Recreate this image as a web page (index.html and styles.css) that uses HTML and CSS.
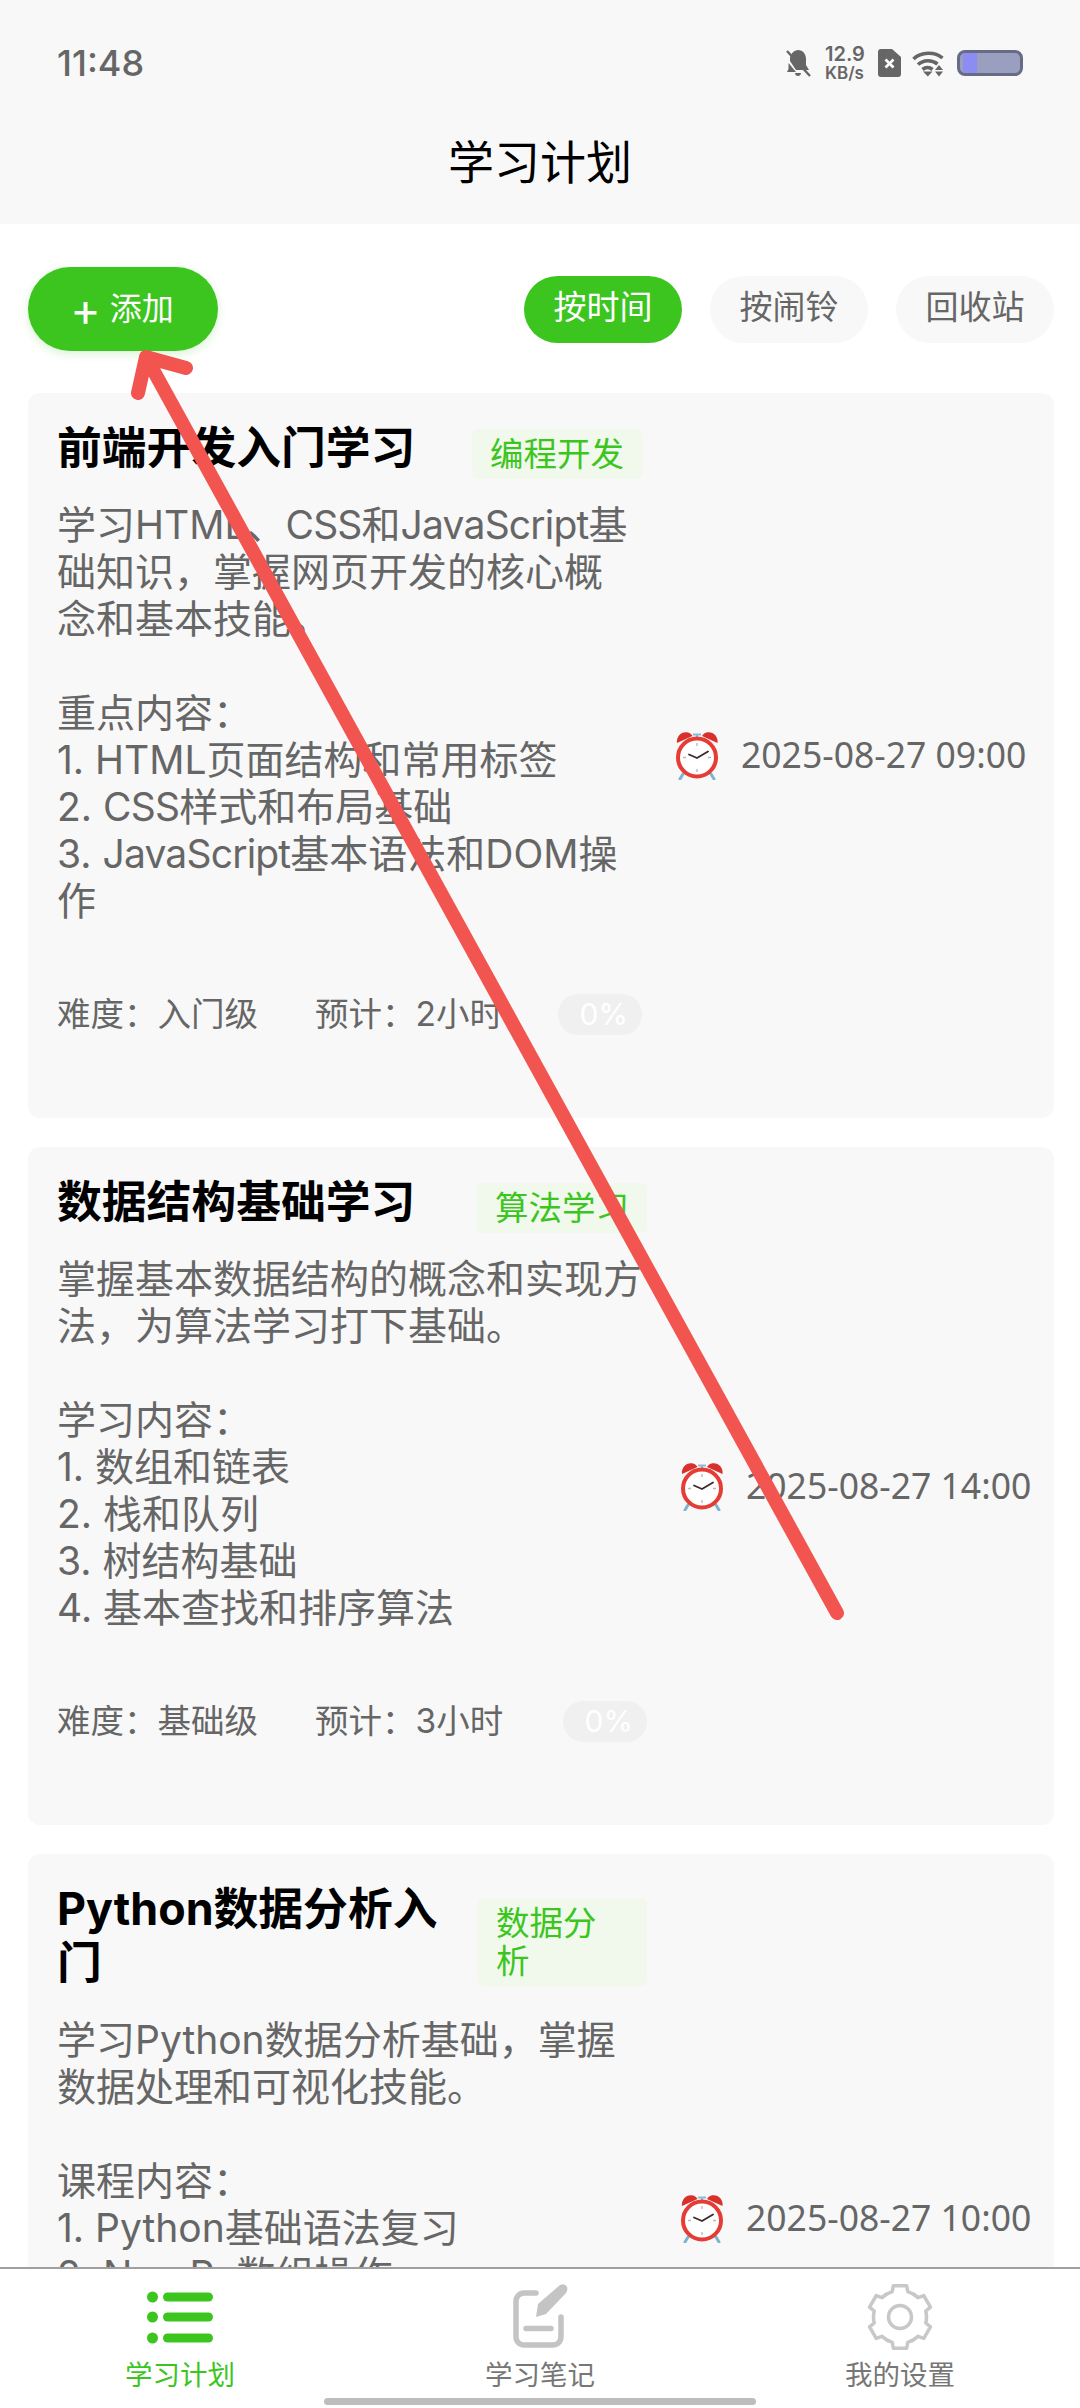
FILE: index.html
```html
<!DOCTYPE html>
<html lang="zh-CN">
<head>
<meta charset="UTF-8" />
<title>学习计划</title>
<meta name="viewport" content="width=device-width, initial-scale=1" />
<link rel="stylesheet" href="styles.css">
</head>
<body>

<svg width="0" height="0" class="defs">
  <symbol id="clock" viewBox="0 0 43 49">
    <path d="M7 43l-3 5M35 43l3 5" stroke="#7fb3cf" stroke-width="3" stroke-linecap="round" />
    <path d="M21 4v5M17 3.5h8" stroke="#8dbbd3" stroke-width="2.2" />
    <path d="M1 12C0 5 6 0 12 1.500c2 .5 4 2 4.500 3.500z" fill="#d9302b" />
    <path d="M41.500 12C42.500 5 36.500 0 30.500 1.500c-2 .5-4 2-4.500 3.500z" fill="#d9302b" />
    <circle cx="21" cy="26.500" r="19" fill="#fff" stroke="#e53d36" stroke-width="4" />
    <path d="M21 12v3M21 38v3M7 26.500h3M32 26.500h3" stroke="#b9b9b9" stroke-width="1.400" />
    <path d="M13 23.500l8 3.500 11-6.500" fill="none" stroke="#3a2a2a" stroke-width="1.800" stroke-linecap="round" stroke-linejoin="round" />
  </symbol>
</svg>

<div class="top-bar">
  <div class="status-bar">
    <span class="clock-time">11:48</span>
    <div class="status-icons">
      <svg class="ic-bell" width="26" height="28" viewBox="0 0 26 28">
        <path d="M13 1c5 0 8 4 8 9v6l3 5H11L5 12v-2c0-1 0-2 .5-3C7 3 10 1 13 1zM3.500 14L11 23H2l1.500-3zM10 24h6c0 2-1.500 3-3 3s-3-1-3-3z" fill="#666" />
        <path d="M2 2l23 25" stroke="#666" stroke-width="2.400" />
      </svg>
      <div class="net-speed"><span>12.9</span><span>KB/s</span></div>
      <svg class="ic-sim" width="23" height="28" viewBox="0 0 23 28">
        <path d="M3 0h11l9 8v17a3 3 0 0 1-3 3H3a3 3 0 0 1-3-3V3a3 3 0 0 1 3-3z" fill="#666" />
        <path d="M7.500 10.500l8 8M15.500 10.500l-8 8" stroke="#fff" stroke-width="2.600" />
      </svg>
      <svg class="ic-wifi" width="34" height="27" viewBox="0 0 34 27">
        <path d="M1.500 9C9 1.500 23 1.500 30.500 8M6 14.500c5.500-5 14-5 19.500-.5M10.500 19.500c3-2.500 7-2.500 10 0" fill="none" stroke="#666" stroke-width="3.600" />
        <path d="M11 21.500h9.500l-4.700 5zM27 15l4 5h-8zM23 21.500h8L27 26.500z" fill="#666" />
      </svg>
      <div class="battery"><div class="battery-level"></div></div>
    </div>
  </div>
  <div class="page-title">学习计划</div>
</div>

<div class="content">
  <div class="toolbar">
    <div class="add-btn"><span class="plus">+</span>添加</div>
    <div class="filters">
      <div class="filter active">按时间</div>
      <div class="filter">按闹铃</div>
      <div class="filter">回收站</div>
    </div>
  </div>

  <div class="plan-list">
    <div class="plan-card">
      <div class="plan-main narrow">
        <div class="plan-head">
          <div class="plan-title">前端开发入门学习</div>
          <div class="plan-tag">编程开发</div>
        </div>
        <div class="plan-desc">学习HTML、<span class="en">CSS</span>和<span class="en">JavaScript</span>基
础知识，掌握网页开发的核心概
念和基本技能。

重点内容：
1. HTML页面结构和常用标签
2. <span class="en">CSS</span>样式和布局基础
3. <span class="en">JavaScript</span>基本语法和DOM操
作</div>
        <div class="plan-meta">
          <span class="meta-item">难度：入门级</span>
          <span class="meta-item">预计：2小时</span>
          <span class="progress">0%</span>
        </div>
      </div>
      <div class="plan-time">
        <svg class="alarm"><use href="#clock" /></svg>
        <span>2025-08-27 09:00</span>
      </div>
    </div>

    <div class="plan-card">
      <div class="plan-main">
        <div class="plan-head">
          <div class="plan-title">数据结构基础学习</div>
          <div class="plan-tag">算法学习</div>
        </div>
        <div class="plan-desc">掌握基本数据结构的概念和实现方
法，为算法学习打下基础。

学习内容：
1. 数组和链表
2. 栈和队列
3. 树结构基础
4. 基本查找和排序算法</div>
        <div class="plan-meta">
          <span class="meta-item">难度：基础级</span>
          <span class="meta-item">预计：3小时</span>
          <span class="progress">0%</span>
        </div>
      </div>
      <div class="plan-time">
        <svg class="alarm"><use href="#clock" /></svg>
        <span>2025-08-27 14:00</span>
      </div>
    </div>

    <div class="plan-card last">
      <div class="plan-main">
        <div class="plan-head">
          <div class="plan-title">Python数据分析入<br>门</div>
          <div class="plan-tag">数据分<br>析</div>
        </div>
        <div class="plan-desc">学习Python数据分析基础，掌握
数据处理和可视化技能。

课程内容：
1. Python基础语法复习
2. NumPy数组操作</div>
      </div>
      <div class="plan-time">
        <svg class="alarm"><use href="#clock" /></svg>
        <span>2025-08-27 10:00</span>
      </div>
    </div>
  </div>
</div>

<div class="tab-bar">
  <div class="tab active">
    <svg width="70" height="70" viewBox="0 0 70 70">
      <g fill="#3cc51f">
        <ellipse cx="7.500" cy="15" rx="5.500" ry="5.500" />
        <ellipse cx="7.500" cy="35" rx="5.500" ry="5.500" />
        <ellipse cx="7.500" cy="56" rx="5.500" ry="5.500" />
        <rect x="18" y="10.500" width="50" height="9" rx="4.500" />
        <rect x="18" y="30.500" width="50" height="9" rx="4.500" />
        <rect x="18" y="51.500" width="50" height="9" rx="4.500" />
      </g>
    </svg>
    <span>学习计划</span>
  </div>
  <div class="tab">
    <svg width="70" height="70" viewBox="0 0 70 70">
      <path d="M31 11H19a8 8 0 0 0-8 8v36a8 8 0 0 0 8 8h29a8 8 0 0 0 8-8V35M21 46.500h25" fill="none" stroke="#c4c4c4" stroke-width="5.500" stroke-linecap="round" />
      <path d="M31 35l2-13L55 3q5-2 7 2 1 3-1 6L41 32z" fill="#c4c4c4" />
    </svg>
    <span>学习笔记</span>
  </div>
  <div class="tab">
    <svg width="70" height="70" viewBox="0 0 70 70">
      <path d="M27.250 9.660L28.350 3.700H41.650L42.750 9.660A26.500 26.500 0 0 1 53.070 15.620L58.780 13.590L65.430 25.110L60.820 29.040A26.500 26.500 0 0 1 60.820 40.960L65.430 44.890L58.780 56.410L53.070 54.380A26.500 26.500 0 0 1 42.750 60.340L41.650 66.300H28.350L27.250 60.340A26.500 26.500 0 0 1 16.930 54.380L11.220 56.410L4.570 44.890L9.180 40.960A26.500 26.500 0 0 1 9.180 29.040L4.570 25.110L11.220 13.590L16.930 15.620A26.500 26.500 0 0 1 27.250 9.660Z" fill="none" stroke="#c8c8c8" stroke-width="3.500" stroke-linejoin="round" />
      <circle cx="35" cy="35" r="11.500" fill="none" stroke="#c8c8c8" stroke-width="3.500" />
    </svg>
    <span>我的设置</span>
  </div>
</div>

<div class="home-indicator"></div>

<!-- hand drawn annotation on top of the screenshot -->
<svg class="annotation" width="1080" height="2408" viewBox="0 0 1080 2408">
  <path d="M138 393L146 357L186 368M146 357L837 1613" fill="none" stroke="#f2544f" stroke-width="14" stroke-linecap="round" stroke-linejoin="round" />
</svg>

</body>
</html>
```

FILE: styles.css
```css
* {
  box-sizing: border-box;
}
html, body {
  margin: 0;
  height: 100%;
}
body {
  position: relative;
  width: 1080px;
  height: 2408px;
  overflow: hidden;
  display: flex;
  flex-direction: column;
  background: #fff;
  font-family: Inter, "Noto Sans CJK SC", sans-serif;
  color: #666;
}
.defs {
  position: absolute;
}

/* top */
.top-bar {
  flex: none;
  height: 224px;
  background: #f8f8f8;
}
.status-bar {
  height: 100px;
  padding: 26px 57px 0 57px;
  display: flex;
  justify-content: space-between;
  align-items: center;
}
.clock-time {
  font-size: 36px;
  font-weight: 500;
  color: #666;
}
.status-icons {
  display: flex;
  align-items: center;
}
.net-speed {
  display: flex;
  flex-direction: column;
  margin: 0 14px 0 14px;
  font-weight: 600;
  text-align: center;
  width: 39px;
  white-space: nowrap;
}
.net-speed span:first-child {
  font-size: 20px;
  line-height: 20px;
}
.net-speed span:last-child {
  font-size: 17px;
  line-height: 18px;
}
.ic-wifi {
  margin: 0 11px;
}
.battery {
  width: 66px;
  height: 26px;
  border: 3px solid #666c85;
  border-radius: 8px;
  background: #9a9fc0;
  padding-left: 3px;
}
.battery-level {
  width: 14px;
  height: 100%;
  background: #8c8cf2;
}
.page-title {
  height: 124px;
  line-height: 124px;
  text-align: center;
  font-size: 46px;
  color: #000;
}

/* list area */
.content {
  flex: 1;
  min-height: 0;
  overflow: hidden;
  padding: 0 26px 0 28px;
}
.toolbar {
  display: flex;
  justify-content: space-between;
  align-items: center;
  margin-top: 43px;
  height: 84px;
}
.add-btn {
  width: 190px;
  height: 84px;
  padding-bottom: 6px;
  border-radius: 42px;
  background: #3cc51f;
  color: #fff;
  font-size: 32px;
  display: flex;
  align-items: center;
  justify-content: center;
  box-shadow: 0 3px 10px rgba(60, 197, 31, 0.2);
}
.plus {
  font-size: 46px;
  line-height: 1;
  margin: 6px 9px 0 -2px;
  font-weight: 400;
}
.filters {
  display: flex;
  gap: 28px;
}
.filter {
  width: 158px;
  height: 67px;
  line-height: 63px;
  border-radius: 34px;
  text-align: center;
  font-size: 33px;
  background: #f8f8f8;
  color: #666;
}
.filter.active {
  background: #3cc51f;
  color: #fff;
}

.plan-list {
  margin-top: 42px;
  display: flex;
  flex-direction: column;
  gap: 29px;
}
.plan-card {
  display: flex;
  align-items: center;
  padding: 28px 29px;
  background: #f8f8f8;
  border-radius: 12px;
}
.plan-card.last {
  min-height: 728px;
}
.plan-card.last .plan-main {
  align-self: flex-start;
}
.plan-main {
  flex: none;
  width: 590px;
}
.plan-main.narrow {
  width: 585px;
}
.plan-head {
  display: flex;
  justify-content: space-between;
  align-items: center;
}
.plan-title {
  font-size: 44.800px;
  line-height: 54px;
  font-weight: 700;
  color: #000;
}
.plan-tag {
  flex: none;
  min-width: 169px;
  margin: 6px 0 -6px;
  padding: 6px 18px;
  font-size: 33.500px;
  line-height: 38px;
  color: #3cc51f;
  background: #f0f9ec;
  border-radius: 6px;
}
.plan-desc {
  margin-top: 26px;
  font-size: 39px;
  line-height: 47px;
  white-space: pre;
  color: #666;
}
.en {
  letter-spacing: -0.8px;
}
.plan-meta {
  display: flex;
  align-items: center;
  margin: 70px 0 55px;
  font-size: 33.500px;
  line-height: 41px;
}
.meta-item {
  white-space: nowrap;
}
.meta-item + .meta-item {
  margin-left: 57px;
}
.progress {
  flex: none;
  margin-left: auto;
  width: 84px;
  height: 41px;
  padding-right: 14px;
  border-radius: 21px;
  background: #f0f0f0;
  color: #fff;
  font-size: 30px;
  text-align: right;
}
.plan-time {
  flex: none;
  display: flex;
  align-items: center;
  gap: 22px;
  margin-left: 34px;
  font-family: "Noto Sans", sans-serif;
  font-size: 35.500px;
  white-space: nowrap;
}
.plan-time span {
  padding-bottom: 3px;
}
.alarm {
  width: 43px;
  height: 49px;
}

/* bottom tabs */
.tab-bar {
  flex: none;
  height: 141px;
  padding-top: 13px;
  border-top: 2px solid #a0a0a0;
  background: #fff;
  display: grid;
  grid-template-columns: repeat(3, 1fr);
  position: relative;
}
.tab {
  display: flex;
  flex-direction: column;
  align-items: center;
  gap: 5px;
  font-size: 27.500px;
  line-height: 36px;
  color: #777;
}
.tab.active {
  color: #3cc51f;
}
.home-indicator {
  position: absolute;
  left: 324px;
  bottom: 3px;
  width: 432px;
  height: 7px;
  border-radius: 4px;
  background: #bdbdbd;
}
.annotation {
  position: absolute;
  left: 0;
  top: 0;
  pointer-events: none;
}
```
